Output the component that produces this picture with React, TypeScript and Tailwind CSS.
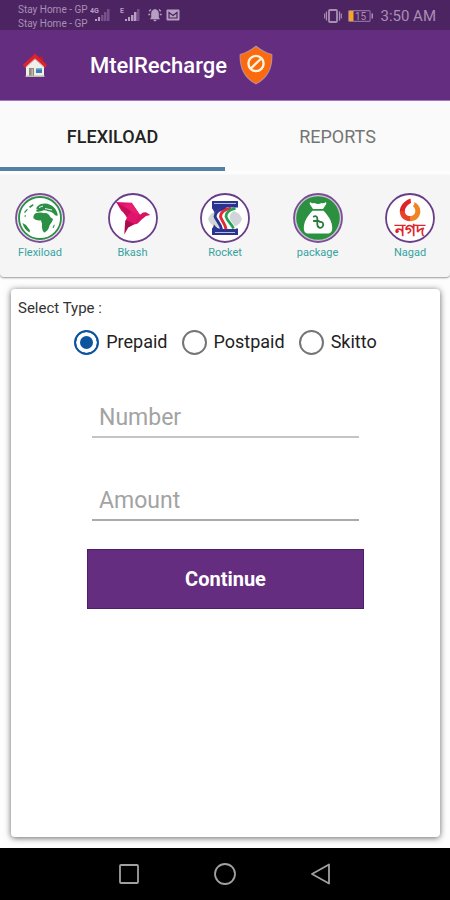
import React, { useState } from "react";

const HouseIcon = () => (
  <svg viewBox="0 0 26 26" className="h-[26px] w-[26px]" aria-hidden="true">
    <path d="M4 12.5 13 5l9 7.5V24H4z" fill="#f1efe9" />
    <path d="M18 4.500h3V10l-3-3z" fill="#b5202a" />
    <path d="M13 1.500.8 13 3 15.600l10-9 10 9 2.200-2.600z" fill="#e0202b" />
    <path d="M3.600 15.500 13 7l9.400 8.500" fill="none" stroke="#b9a9a4" strokeWidth="1" />
    <path d="M7 16h5v8H7z" fill="#8f8a7c" />
    <path d="M9.500 17H11v7H9.500z" fill="#c3b9a2" />
    <path d="M14 16h6v5h-6z" fill="#3f7fb0" />
    <path d="M14 16h6v1.500h-6z" fill="#79b4d8" />
    <path d="M3.500 23.500h19V25h-19z" fill="#b9bdb0" />
  </svg>
);

const ShieldIcon = () => (
  <svg viewBox="0 0 34 40" className="h-10 w-[34px]" aria-hidden="true">
    <path
      d="M17 1.200C12.500 4.800 7 8 1.300 9.500 0.500 22 5.500 33.500 17 38.800 28.500 33.500 33.500 22 32.700 9.500 27 8 21.500 4.800 17 1.200z"
      fill="#fb6a0c"
      stroke="#c08a94"
      strokeWidth="1.200"
    />
    <circle cx="17" cy="18.500" r="7.600" fill="none" stroke="#fff3dc" strokeWidth="2.400" />
    <path d="m11.800 23.500 10.400-10" stroke="#fff3dc" strokeWidth="2.400" />
  </svg>
);

const SignalIcon = ({ label, dim }: { label: string; dim?: boolean }) => (
  <svg viewBox="0 0 24 16" className="h-4 w-6" aria-hidden="true">
    <text x="0" y="6" fontSize="7" fontWeight="700" fill="#b79fc2">
      {label}
    </text>
    <path d="M5 12h2v2H5zM8 10h2v4H8z" fill="#b79fc2" />
    <path d="M11 8h2.500v6H11z" fill={dim ? "#76508a" : "#b79fc2"} />
    <path d="M14 5h2.500v9H14z" fill={dim ? "#76508a" : "#b79fc2"} />
    <path d="M17 2h2.500v12H17z" fill="#76508a" />
  </svg>
);

const BellIcon = () => (
  <svg viewBox="0 0 14 14" className="h-3.5 w-3.5" aria-hidden="true">
    <path
      d="M7 1c-2.700.6-3.800 2.300-3.800 4.500v3.700L2 11.200h10l-1.200-2V5.500C10.800 3.300 9.700 1.600 7 1zM5.500 11.700h3c0 2-3 2-3 0z"
      fill="#b79fc2"
    />
    <path
      d="M3 1.500 1.200 3.200M11 1.500l1.800 1.700M.3 6.500h1.900M11.800 6.500h1.900"
      stroke="#b79fc2"
      strokeWidth="1.300"
    />
  </svg>
);

const MailIcon = () => (
  <svg viewBox="0 0 14 12" className="h-3 w-3.5" aria-hidden="true">
    <rect x=".5" y=".5" width="13" height="11" rx="1" fill="#b79fc2" />
    <path d="M3 3.500v5.500h8V3.500L7 6.500z" fill="none" stroke="#4d2462" strokeWidth="1.200" />
  </svg>
);

const VibrateIcon = () => (
  <svg viewBox="0 0 18 16" className="h-4 w-[18px]" aria-hidden="true">
    <rect x="5" y="2" width="8" height="12" rx="1" fill="none" stroke="#a98fb6" strokeWidth="1.800" />
    <path d="M2.500 3.500v9M15.500 3.500v9M.7 5.500v5M17.300 5.500v5" stroke="#a98fb6" strokeWidth="1.200" />
  </svg>
);

const BatteryIcon = () => (
  <svg viewBox="0 0 26 12" className="h-3 w-[26px]" aria-hidden="true">
    <rect x=".6" y=".6" width="21.500" height="10.800" rx="1" fill="none" stroke="#8d6c9e" strokeWidth="1.200" />
    <path d="M1 1h4.500v10H1z" fill="#f5a623" />
    <path d="M23.500 3.500H25v5h-1.500z" fill="#a98fb6" />
    <text x="12.500" y="9.500" fontSize="10" textAnchor="middle" fill="#a98fb6">
      15
    </text>
  </svg>
);

const GlobeLogo = () => (
  <svg viewBox="0 0 50 50" className="h-[50px] w-[50px]" aria-hidden="true">
    <circle cx="25" cy="25" r="24" fill="#ece6f0" stroke="#7a4f96" strokeWidth="1.800" />
    <circle cx="25" cy="25" r="21" fill="#fff" stroke="#2b8f45" strokeWidth="1.800" />
    <path
      d="M21 15.500c1-2.500 3-3.500 5-4.500 5-1.500 10 0 13.500 4 2 2.200 3 5 3.300 7.500-1.800.5-3.300-.5-4.300-2-2-1.500-3.500-2.500-5.500-2.200-1.500-1-3.500-1.500-5-.8-2 .8-4 1.500-6.500 1-.8-1.500.3-2.200 1.500-2.300z"
      fill="#2b8f45"
    />
    <path
      d="M20.500 20.200c3-.9 6-1.200 8.500 0 2.700-.7 4.800 1 6 3.200 1 1.400 2 1.800 3 2.600-.3 2.700-2.500 4.500-3.500 6.500-.5 3-2.500 6.500-5.500 7-2-2-2.200-5.500-2-8 0-2-1-3-1-4.200-2.500.5-5.500 0-7.500-2-.5-2 .4-4 2-5.100z"
      fill="#2b8f45"
    />
    <path
      d="m24 14.500 4-1.500M30 15.500l7 1.500M33 19.500l4 4"
      fill="none"
      stroke="#fff"
      strokeWidth=".9"
    />
    <path
      d="m7.500 30 3.500 2 4 5.500-.5 2c-3.500-2-6-5-7-9.500zM9 19l3-3 1 .5-3 3.500zM14 13.500l4-2.500.5 1.500-3.500 2.500zM9 23l2-1-.5 2z"
      fill="#2b8f45"
    />
    <path d="m37.500 34.500 1.500-3 .7.500-1 3z" fill="#2b8f45" />
  </svg>
);

const BirdLogo = () => (
  <svg viewBox="0 0 50 50" className="h-[50px] w-[50px]" aria-hidden="true">
    <circle cx="25" cy="25" r="24" fill="#fff" stroke="#6a3d88" strokeWidth="1.800" />
    <path d="m8 9 15.700.8 9.300 13.500-3.500 6.500-9.500 4.500-3-3.300 1.800-7z" fill="#e2136e" />
    <path d="m8 9 15.500 9.500-4.700 5.500z" fill="#c40f5c" />
    <path d="M23.700 9.800 32 22l-8.500-3.500L15 12z" fill="#e91e70" />
    <path d="m29.500 23.500 5.500-4 3-.3 4.300 2.800-4.300 1-4.300 3.500-4 4-3.200 1z" fill="#d81462" />
    <path d="m17.500 27 9 4-6.200 3.500-4 7 .5-8.500z" fill="#a80e4a" />
    <path d="m9.500 11.500 4 6.500 3.500 2z" fill="#d1125f" />
  </svg>
);

const RocketLogo = () => (
  <svg viewBox="0 0 50 50" className="h-[50px] w-[50px]" aria-hidden="true">
    <circle cx="25" cy="25" r="24" fill="#fff" stroke="#6a3d88" strokeWidth="1.800" />
    <path d="M8 26c2-6 7-9 17-9s15 3 17 9c-2 6-7 9-17 9S10 32 8 26z" fill="#d0d6d8" />
    <path d="M12 8h26v6.500H25c-5 .5-8 2.500-10.500 5.500-.5-2-1.500-3.500-2.500-4.500z" fill="#2b3390" />
    <path d="M12 42h26v-6.500H19c-2.500-1-4-2.500-5-4-.3 1.500-1 3-2 4z" fill="#2b3390" />
    <path d="M14 10.500h22M15 39.500h20" stroke="#b7bade" strokeWidth="1.200" />
    <path
      d="M39 15.500H26c-6 2-9 5-9 9 1.500 4 4.500 7 5.500 11.500H36c-1.500-5-6.500-8-6.500-12.500 1.500-4 4.500-6 9.500-8z"
      fill="#fff"
    />
    <path d="M26.500 14.800c-6 1.200-11.500 4.200-11.500 8.700 1.500 4.500 5.500 7 6.500 12.500" fill="none" stroke="#2b3390" strokeWidth="2.800" />
    <path d="M31 15.300c-6 1.200-10.500 4.200-10.500 8.200 1 4.500 5 7.500 5.500 12.500" fill="none" stroke="#e22b38" strokeWidth="3" />
    <path d="M35.500 15.300c-6 1.200-9.500 4.200-9.500 8.200 1 4.500 5.500 7 7.500 12" fill="none" stroke="#21a354" strokeWidth="2.800" />
  </svg>
);

const MoneyBagLogo = () => (
  <svg viewBox="0 0 50 50" className="h-[50px] w-[50px]" aria-hidden="true">
    <circle cx="25" cy="25" r="24" fill="#d3c6dc" stroke="#7a4f96" strokeWidth="1.800" />
    <circle cx="25" cy="25" r="21.800" fill="#2b9140" />
    <path d="M17 9c1.500 1.200 3 1.500 4.500 1 2.300 1.200 4.700 1.200 7 0 1.500.5 3 .2 4.500-1l.3 2-3.300 5H20l-3.300-5z" fill="#fff" />
    <path d="M19.500 17.800h11c4.500 4.700 8.700 10.200 8.700 17.200 0 3.700-1.500 5.500-5 5.500H15.800c-3.500 0-5-1.800-5-5.500 0-7 4.200-12.500 8.700-17.200z" fill="#fff" />
    <path
      d="M20.800 23.500c2-1 3.500 0 3.500 2.300V31c0 4 3.500 5 5.300 2.500 1.500-2.500.2-5-2.600-4.500M20.800 28h5"
      fill="none"
      stroke="#2b7a3c"
      strokeWidth="1.800"
      strokeLinecap="round"
    />
  </svg>
);

const NagadLogo = () => (
  <svg viewBox="0 0 50 50" className="h-[50px] w-[50px]" aria-hidden="true">
    <circle cx="25" cy="25" r="24" fill="#fff" stroke="#6a3d88" strokeWidth="1.800" />
    <path d="M25.500 5.500C19 8 15 12.500 14.800 18.500l5 1.500c-.3-5 2.200-8 6.200-10z" fill="#df232b" />
    <path d="M14.800 18c0 6 4.500 10.300 10.200 10.300V23c-3 0-5.200-2-5.200-5z" fill="#e8432a" />
    <path d="M25 28.300c6 0 10.300-4.300 10.300-9.800 0-4-2-7.500-6-9.500.3 2-.3 3-1.300 4.200 1.500 1 2.300 2.800 2.300 4.800 0 3-2.300 5-5.300 5z" fill="#f08424" />
    <text
      x="25"
      y="43"
      fontSize="17"
      fontWeight="700"
      textAnchor="middle"
      fill="#de252c"
    >
      নগদ
    </text>
  </svg>
);

const services = [
  { name: "Flexiload", Logo: GlobeLogo },
  { name: "Bkash", Logo: BirdLogo },
  { name: "Rocket", Logo: RocketLogo },
  { name: "package", Logo: MoneyBagLogo },
  { name: "Nagad", Logo: NagadLogo },
];

const types = ["Prepaid", "Postpaid", "Skitto"];

const App = () => {
  const [type, setType] = useState("Prepaid");
  const [tab, setTab] = useState("FLEXILOAD");

  return (
    <div className="flex min-h-screen flex-col bg-[#fdfdfd] font-[Roboto,sans-serif] text-[#333]">
      {/* Status bar */}
      <div className="flex h-[30px] items-center bg-[#4d2462] pr-[14px] pl-[18px] text-[#a98fb6]">
        <div className="pt-1 text-[10px] leading-[14px]">
          <p>Stay Home - GP</p>
          <p>Stay Home - GP</p>
        </div>
        <div className="flex items-center gap-1 pl-0.5">
          <SignalIcon label="4G" dim />
          <div className="flex items-center gap-1 pl-0.5">
            <SignalIcon label="E" />
            <BellIcon />
          </div>
          <MailIcon />
        </div>
        <div className="ml-auto flex items-center gap-1.5 pt-0.5">
          <VibrateIcon />
          <BatteryIcon />
          <p className="text-[15px] leading-5">3:50 AM</p>
        </div>
      </div>

      {/* App bar */}
      <header className="flex h-[70px] items-center bg-[#652d80] pl-[22px] text-white">
        <button type="button" aria-label="Home">
          <HouseIcon />
        </button>
        <h1 className="pl-[42px] text-[22px] font-medium">MtelRecharge</h1>
        <div className="pl-3">
          <ShieldIcon />
        </div>
      </header>

      {/* Tabs */}
      <nav className="flex border-t border-[#a777bd] bg-[#fafafa]">
        {["FLEXILOAD", "REPORTS"].map((name) => (
          <button
            key={name}
            type="button"
            onClick={() => setTab(name)}
            className={`h-[70px] flex-1 border-b-4 pt-1 text-[18px] ${
              tab === name
                ? "border-[#557fa3] font-medium text-[#222]"
                : "border-transparent text-[#757575]"
            }`}
          >
            {name}
          </button>
        ))}
      </nav>

      {/* Services */}
      <div className="mt-1 flex justify-between rounded-b bg-[#f5f5f5] px-[15px] pt-[18px] pb-4 shadow-[0_1px_2px_rgba(0,0,0,0.4)]">
        {services.map(({ name, Logo }) => (
          <button
            key={name}
            type="button"
            className="flex w-[50px] flex-col items-center gap-0.5 text-[11px] leading-4 text-[#35a3a0]"
          >
            <Logo />
            {name}
          </button>
        ))}
      </div>

      {/* Recharge form */}
      <form
        className="mr-2.5 mt-3 mb-[11px] ml-[11px] flex-1 rounded-sm bg-white shadow-[0_1px_6px_rgba(0,0,0,0.6)]"
        onSubmit={(e) => e.preventDefault()}
      >
        <fieldset>
          <legend className="px-[7px] pt-[9px] text-[15px] leading-5">
            Select Type :
          </legend>
          <div className="flex justify-center gap-3.5 pt-2.5">
            {types.map((name) => (
              <label
                key={name}
                className="flex items-center gap-[7px] text-[18px] leading-7 text-[#222]"
              >
                <input
                  type="radio"
                  name="type"
                  value={name}
                  checked={type === name}
                  onChange={() => setType(name)}
                  className="m-0 h-[25px] w-[25px] appearance-none rounded-full border-2 border-[#757575] bg-white checked:border-[#0b559f] checked:bg-[#0b559f] checked:shadow-[inset_0_0_0_4px_white]"
                />
                {name}
              </label>
            ))}
          </div>
        </fieldset>

        <div className="mx-[76px] pt-[35px]">
          <div className="flex flex-col gap-9 px-[5px]">
            <input
              type="tel"
              aria-label="Number"
              placeholder="Number"
              className="h-[47px] w-full border-b-2 border-[#c4c4c4] px-[7px] pt-2 text-[23px] outline-none placeholder:text-[#a3a3a3]"
            />
            <input
              type="text"
              inputMode="decimal"
              aria-label="Amount"
              placeholder="Amount"
              className="h-[47px] w-full border-b-2 border-[#ababab] px-[7px] pt-2 text-[23px] outline-none placeholder:text-[#a3a3a3]"
            />
          </div>
          <button
            type="submit"
            className="mt-7 h-[60px] w-full border border-[#4d1e6b] bg-[#652d80] text-xl font-bold text-white"
          >
            Continue
          </button>
        </div>
      </form>

      {/* System navigation */}
      <div className="flex h-[52px] items-center justify-center gap-[74px] bg-black">
        <button type="button" aria-label="Recent apps">
          <svg viewBox="0 0 22 22" className="h-[22px] w-[22px]" fill="none" stroke="#a0a0a0" strokeWidth="1.800">
            <rect x="2" y="2" width="18" height="18" rx="1" />
          </svg>
        </button>
        <button type="button" aria-label="Home screen">
          <svg viewBox="0 0 22 22" className="h-[22px] w-[22px]" fill="none" stroke="#a0a0a0" strokeWidth="1.800">
            <circle cx="11" cy="11" r="10" />
          </svg>
        </button>
        <button type="button" aria-label="Back">
          <svg viewBox="0 0 22 22" className="h-[22px] w-[22px]" fill="none" stroke="#a0a0a0" strokeWidth="1.800" strokeLinejoin="round">
            <path d="M19 1.500v19L2 11z" />
          </svg>
        </button>
      </div>
    </div>
  );
};

export default App;
